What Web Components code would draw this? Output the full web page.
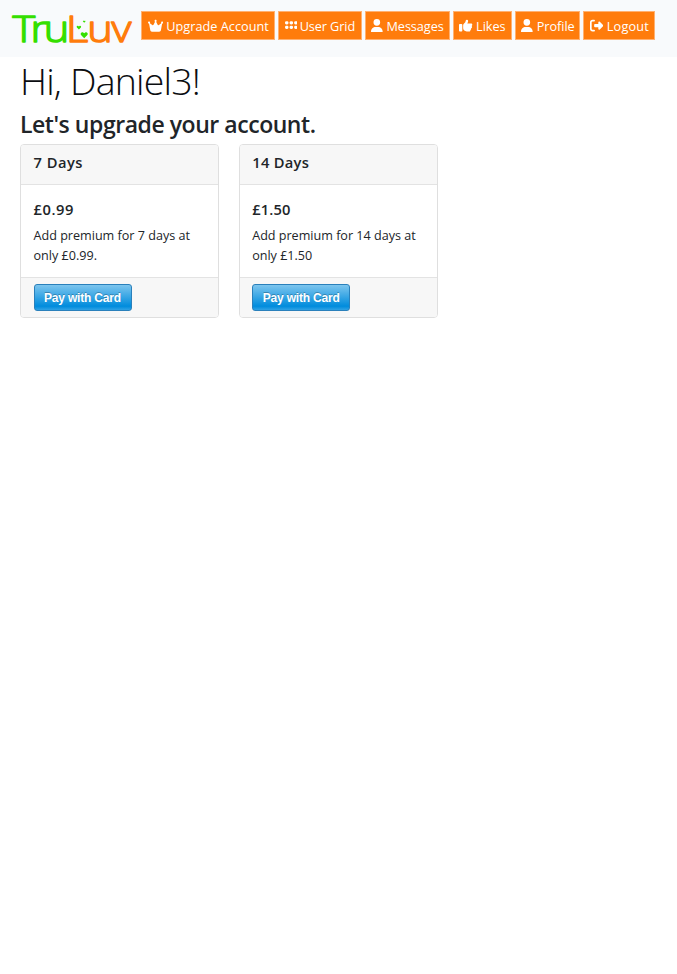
<!DOCTYPE html>
<html lang="en"><head><meta charset="utf-8"><title>TruLuv</title>
<style>
html,body{margin:0;background:#fff;color:#212529;font-family:"Open Sans","Noto Sans",sans-serif}
</style></head><body>
<upgrade-page></upgrade-page>
<script>
function define(name, html, setup){
  customElements.define(name, class extends HTMLElement{
    connectedCallback(){
      if(this.shadowRoot) return;
      this.attachShadow({mode:'open'}).innerHTML = html;
      if(setup) setup(this, this.shadowRoot);
    }
  });
}

/* One line of text whose tracking is set to reach the given width. */
define('fit-text','<style>:host{display:block;white-space:nowrap}span{display:inline-block}</style><span></span>',(el,root)=>{
  const s=root.querySelector('span');
  s.textContent=el.getAttribute('text');
  const d=(+el.getAttribute('w')-s.getBoundingClientRect().width)/s.textContent.length;
  s.style.letterSpacing=d.toFixed(3)+'px';
});

define('brand-logo',`<style>:host{display:block;width:124px;height:34px}svg{display:block;overflow:visible}text{font-family:"Open Sans",sans-serif;font-size:37px;font-weight:300;stroke-width:1.4;stroke-linejoin:round}</style>
<svg width="124" height="34" viewBox="11 12 124 34">
<g transform="translate(0 42.300) scale(1.17 1)"><text fill="#35df00" stroke="#35df00" x="10.600 26 37.300" y="0">Tru</text>
<text fill="#ff7c0c" stroke="#ff7c0c" x="56.400 74.500 95.300" y="0">Luv</text></g>
<g fill="#35df00"><path d="M84.200 38.200l-3.200-3.300c-1.100-1.500.6-3.400 2.200-2.500l1 .8 1-.8c1.600-.9 3.400 1 2.200 2.500z"/><path d="M78.900 29.400l-2-2c-.7-1 .4-2 1.400-1.400l.6.500.6-.5c1-.6 2.100.4 1.400 1.400z"/><path d="M84.200 22.800l-1.200-1.200c-.4-.7.300-1.200.9-.8l.3.300.3-.3c.6-.4 1.300.1.900.800z"/></g></svg>`);

const ICONS={
 crown:['0 0 576 512',16,'M309 106c11.400-7 19-19.700 19-34 0-22.100-17.900-40-40-40s-40 17.900-40 40c0 14.400 7.600 27 19 34l-57.300 114.600c-9.100 18.200-32.700 23.400-48.600 10.700L72 160c5-6.700 8-15 8-24 0-22.100-17.900-40-40-40S0 113.900 0 136s17.900 40 40 40h.7l45.700 251.400C91.900 457.900 118.500 480 149.400 480h277.200c30.900 0 57.500-22.100 63-52.600L535.300 176h.7c22.100 0 40-17.900 40-40s-17.900-40-40-40-40 17.900-40 40c0 9 3 17.300 8 24l-89.100 71.300c-15.900 12.700-39.500 7.500-48.600-10.700z'],
 grid:['0 0 448 448',13.300,'M50 78h24q50 0 50 50v14q0 50-50 50H50q-50 0-50-50v-14q0-50 50-50zM212 78h24q50 0 50 50v14q0 50-50 50h-24q-50 0-50-50v-14q0-50 50-50zM374 78h24q50 0 50 50v14q0 50-50 50h-24q-50 0-50-50v-14q0-50 50-50zM50 240h24q50 0 50 50v14q0 50-50 50H50q-50 0-50-50v-14q0-50 50-50zM212 240h24q50 0 50 50v14q0 50-50 50h-24q-50 0-50-50v-14q0-50 50-50zM374 240h24q50 0 50 50v14q0 50-50 50h-24q-50 0-50-50v-14q0-50 50-50z'],
 user:['0 0 448 512',12.300,'M224 256A128 128 0 1 0 224 0a128 128 0 1 0 0 256zm-45.700 48C79.800 304 0 383.800 0 482.300 0 498.700 13.300 512 29.700 512h388.600c16.400 0 29.700-13.300 29.700-29.700C448 383.800 368.200 304 269.700 304z'],
 like:['0 0 512 512',14,'M313.400 32.900c26 5.200 42.900 30.500 37.700 56.500l-2.300 11.400c-5.300 26.700-15.100 52.100-28.800 75.200h144c26.500 0 48 21.500 48 48 0 18.500-10.500 34.600-25.900 42.600C497 275.400 504 288.900 504 304c0 23.400-16.800 42.900-38.900 47.100 4.400 7.300 6.900 15.800 6.900 24.900 0 21.300-13.900 39.400-33.100 45.600.7 3.300 1.100 6.800 1.100 10.400 0 26.500-21.500 48-48 48h-97.500c-19 0-37.500-5.600-53.300-16.100l-38.500-25.700C176 420.400 160 390.400 160 358.300V247.100c0-29.200 13.300-56.700 36-75l7.400-5.900c26.500-21.200 44.600-51 51.200-84.200l2.300-11.400c5.200-26 30.500-42.900 56.500-37.700zM32 192h64c17.700 0 32 14.300 32 32v224c0 17.700-14.300 32-32 32H32c-17.700 0-32-14.300-32-32V224c0-17.700 14.300-32 32-32z'],
 out:['0 0 512 512',14,'M377.900 105.900 500.700 228.700c7.200 7.200 11.300 17.100 11.300 27.300s-4.100 20.100-11.300 27.300L377.900 406.100c-6.400 6.400-15 9.900-24 9.900-18.700 0-33.900-15.200-33.900-33.900V320H192c-17.700 0-32-14.300-32-32v-64c0-17.700 14.300-32 32-32h128v-62.100c0-18.700 15.200-33.900 33.900-33.900 9 0 17.600 3.600 24 9.900zM160 96H96c-17.700 0-32 14.300-32 32v256c0 17.700 14.300 32 32 32h64c17.700 0 32 14.300 32 32s-14.300 32-32 32H96c-53 0-96-43-96-96V128C0 75 43 32 96 32h64c17.700 0 32 14.300 32 32s-14.300 32-32 32z']
};
define('nav-button',`<style>:host{display:flex;flex:none;box-sizing:border-box;height:29px;background:#ff7c0c;border:1px solid #ffb171;color:#fff;padding-left:5.500px;font-size:12.7px;line-height:28px}
svg{display:block;flex:none;fill:#fff;margin-top:7px}</style><svg></svg>`,(el,root)=>{
  const icon=el.getAttribute('icon'),[vb,w,d]=ICONS[icon],svg=root.querySelector('svg');
  const b=vb.split(' '),iw=w*.95;
  svg.setAttribute('viewBox',vb);svg.setAttribute('width',iw);svg.setAttribute('height',iw*b[3]/b[2]);
  if(icon==='user')svg.style.marginTop='6.500px';
  svg.innerHTML='<path d="'+d+'"/>';
  el.style.width=el.getAttribute('w')+'px';
  const t=document.createElement('fit-text');t.setAttribute('text',el.getAttribute('label'));t.setAttribute('w',el.getAttribute('tw'));
  t.style.marginLeft=el.getAttribute('gap')+'px';root.append(t);
});

define('top-nav',`<style>:host{display:flex;box-sizing:border-box;height:57px;background:#f8fafc;padding:11px 0 0 11px}
brand-logo{flex:none;margin-top:1px}nav{display:flex;gap:3px;margin-left:6px}</style>
<brand-logo></brand-logo><nav>
<nav-button icon="crown" label="Upgrade Account" w="134" tw="102.500" gap="3.600"></nav-button>
<nav-button icon="grid" label="User Grid" w="83.600" tw="55.500" gap="2.500"></nav-button>
<nav-button icon="user" label="Messages" w="85.400" tw="57.300" gap="3.700"></nav-button>
<nav-button icon="like" label="Likes" w="59" tw="29.500" gap="3.300"></nav-button>
<nav-button icon="user" label="Profile" w="65.500" tw="38" gap="3.500"></nav-button>
<nav-button icon="out" label="Logout" w="72" tw="42.200" gap="3.500"></nav-button></nav>`);

define('pay-button',`<style>:host{display:block}button{display:block;box-sizing:border-box;width:98px;height:27px;margin:0;padding:0;border:1px solid #2a80bb;border-radius:3px;background:linear-gradient(#7dc5ee,#008cdd 85%,#30a2e4);color:#fff;font:bold 12px/26px "Liberation Sans",sans-serif;text-shadow:0 -1px 0 rgba(0,0,0,.25)}</style><button><fit-text text="Pay with Card" w="77"></fit-text></button>`);

define('plan-card',`<style>:host{display:block;box-sizing:border-box;width:199px;height:174px;border:1px solid #dfdfdf;border-radius:4px;overflow:hidden;background:#fff}
header,footer{background:#f7f7f7;box-sizing:border-box;padding-left:12.500px}
header{height:40px;border-bottom:1px solid #e3e3e3;padding-top:7px;font-weight:600;font-size:14.700px;line-height:20px}
section{height:92px;padding:14px 0 0 12.500px;box-sizing:border-box}
.price{font-weight:600;font-size:14.700px;line-height:20px;margin-bottom:7px}
.copy{font-size:12.600px;line-height:20px}
footer{height:41px;border-top:1px solid #e3e3e3;padding-top:6px}</style>
<header><slot name="title"></slot></header><section><div class="price"><slot name="price"></slot></div><div class="copy"><slot></slot></div></section><footer><pay-button></pay-button></footer>`);

define('upgrade-page',`<style>:host{display:block}main{padding:0 20px}
h1{margin:0;font-size:37.500px;font-weight:300;line-height:48px;color:#0b0d10}
h2{margin:3px 0 4px;font-size:23px;font-weight:600;line-height:32px}
.cards{display:flex;gap:19.700px}</style>
<top-nav></top-nav><main><h1><fit-text text="Hi, Daniel3!" w="180"></fit-text></h1>
<h2><fit-text text="Let's upgrade your account." w="295.500"></fit-text></h2>
<div class="cards">
<plan-card><fit-text slot="title" text="7 Days" w="49.500"></fit-text><fit-text slot="price" text="£0.99" w="40.500"></fit-text><fit-text text="Add premium for 7 days at" w="156.500"></fit-text><fit-text text="only £0.99." w="63.500"></fit-text></plan-card>
<plan-card><fit-text slot="title" text="14 Days" w="57"></fit-text><fit-text slot="price" text="£1.50" w="38.500"></fit-text><fit-text text="Add premium for 14 days at" w="163.500"></fit-text><fit-text text="only £1.50" w="60"></fit-text></plan-card>
</div></main>`);
</script></body></html>
